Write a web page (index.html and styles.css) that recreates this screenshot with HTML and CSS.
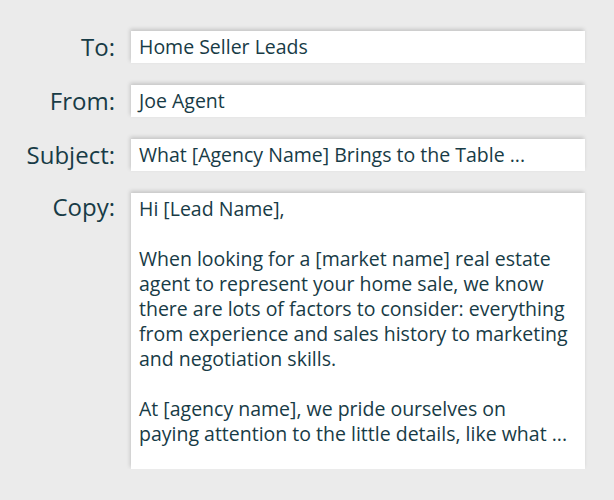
FILE: index.html
```html
<!DOCTYPE html>
<html lang="en">
<head>
    <meta charset="UTF-8">
    <meta name="viewport" content="width=device-width, initial-scale=1.0">
    <title>Email Template</title>
    <link rel="stylesheet" href="styles.css">
</head>
<body>
    <div class="email-form">
        <div class="label">To:</div>
        <div class="field">Home Seller Leads</div>

        <div class="label">From:</div>
        <div class="field">Joe Agent</div>

        <div class="label">Subject:</div>
        <div class="field">What [Agency Name] Brings to the Table ...</div>

        <!-- body copy -->
        <div class="label label-top">Copy:</div>
        <div class="field copy">
            <p>Hi [Lead Name],</p>
            <p>When looking for a [market name] real estate<br>agent to represent your home sale, we know<br>there are lots of factors to consider: everything<br>from experience and sales history to marketing<br>and negotiation skills.</p>
            <p>At [agency name], we pride ourselves on<br>paying attention to the little details, like what ...</p>
        </div>
    </div>
</body>
</html>
```

FILE: styles.css
```css
body {
    margin: 0;
    background-color: #ebebeb;
    font-family: "Open Sans", Lato, sans-serif;
    color: #183b46;
}
.email-form {
    display: grid;
    grid-template-columns: 115px 454px;
    column-gap: 16px;
    row-gap: 22px;
    padding: 31px 0 0 0;
}
.label {
    text-align: right;
    font-size: 24px;
    line-height: 32px;
}
.label-top {
    line-height: 24px;
    padding-top: 2px;
}
.field {
    background-color: white;
    height: 32px;
    line-height: 32px;
    padding: 0 8px;
    font-size: 19.5px;
    box-shadow: -1px -2px 4px rgba(0, 0, 0, 0.16);
}
.copy {
    height: 276px;
    line-height: 25px;
    padding-top: 3px;
    box-sizing: border-box;
}
.copy p {
    margin: 0 0 25px 0;
}
```
